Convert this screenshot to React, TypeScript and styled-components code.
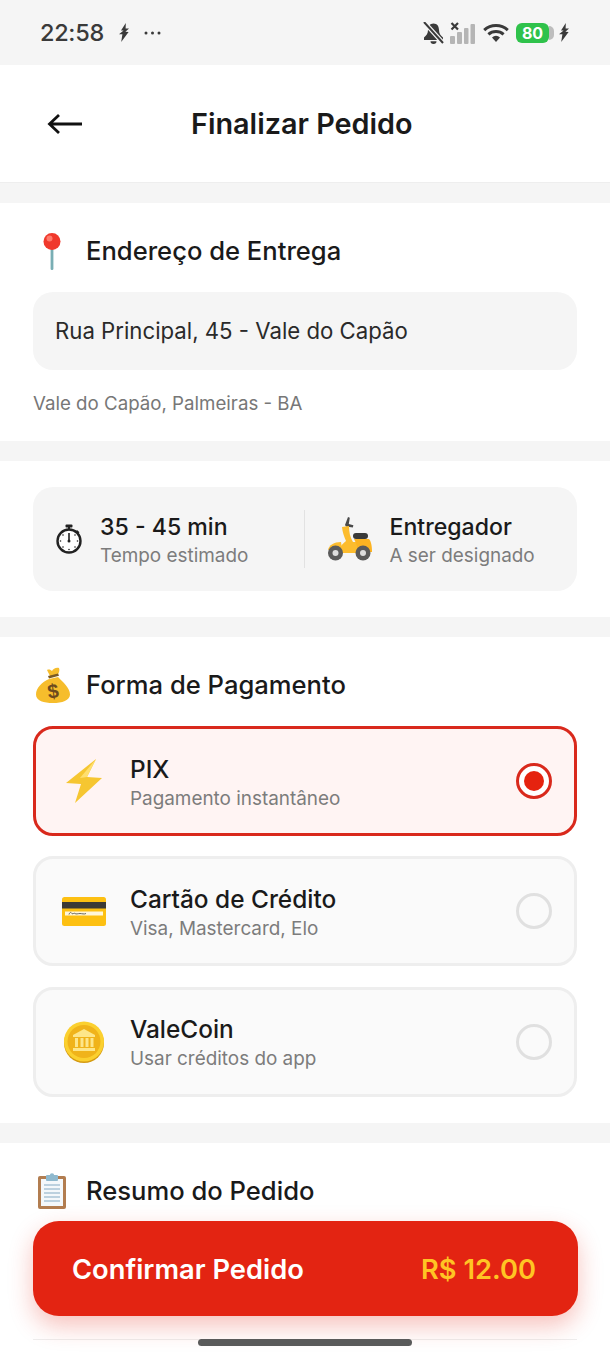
import React from 'react'
import styled, { createGlobalStyle } from 'styled-components'

const GlobalStyle = createGlobalStyle`
  html, body {
    margin: 0;
    padding: 0;
    background: #f5f5f5;
  }
  * {
    box-sizing: border-box;
  }
`

const Screen = styled.div`
  position: relative;
  width: 610px;
  height: 1356px;
  overflow: hidden;
  background: #f5f5f5;
  color: #1a1a1a;
  font-family: Inter, "Noto Sans", sans-serif;
`

const StatusBar = styled.div`
  height: 65px;
  padding: 0 41px 0 40px;
  display: flex;
  align-items: center;
  justify-content: space-between;
  color: #3a3a3a;
`

const StatusGroup = styled.div<{ $gap: number }>`
  display: flex;
  align-items: center;
  gap: ${p => p.$gap}px;
`

const WifiSlot = styled.span`
  display: flex;
  margin: 0 1px 0 2px;
`

const Clock = styled.span`
  font-size: 23.5px;
  font-weight: 500;
  letter-spacing: -0.3px;
`

const Battery = styled.div`
  position: relative;
  width: 33px;
  height: 20px;
  margin-right: 4px;
  border-radius: 6px;
  background: #2fc24b;
  color: #fff;
  font-size: 16px;
  font-weight: 700;
  display: flex;
  align-items: center;
  justify-content: center;
  &::after {
    content: '';
    position: absolute;
    left: 33px;
    top: 3px;
    width: 5px;
    height: 14px;
    border-radius: 0 5px 5px 0;
    background: #bdbdbd;
  }
`

const Header = styled.header`
  height: 118px;
  background: #fff;
  border-bottom: 1px solid #eeeeee;
  display: flex;
  align-items: center;
  padding: 0 47px;
`

const Title = styled.h1`
  margin: 0 0 0 108px;
  font-size: 28.8px;
  font-weight: 600;
  letter-spacing: 0;
`

const Section = styled.section<{ $height: number }>`
  display: flow-root;
  height: ${p => p.$height}px;
  margin-top: 20px;
  padding: 0 33px;
  background: #fff;
`

const SectionHead = styled.div`
  display: flex;
  align-items: center;
  gap: 16px;
  height: 40px;
  margin-top: 0;
  padding-top: 28px;
  box-sizing: content-box;
`

const SectionTitle = styled.h2`
  margin: 0 0 2px;
  font-size: 25.6px;
  font-weight: 500;
  letter-spacing: 0;
`

const IconSlot = styled.span`
  width: 37px;
  display: flex;
  justify-content: center;
  flex: none;
`

const AddressBox = styled.div`
  height: 78px;
  margin-top: 21px;
  border-radius: 20px;
  background: #f5f5f5;
  display: flex;
  align-items: center;
  padding: 0 22px 2px;
  font-size: 22.2px;
  color: #2a2a2a;
`

const AddressNote = styled.p`
  margin: 22px 0 0;
  font-size: 18.7px;
  line-height: 24px;
  color: #777;
`

const InfoCard = styled.div`
  margin-top: 26px;
  height: 104px;
  border-radius: 20px;
  background: #f5f5f5;
  display: flex;
  align-items: center;
`

const InfoCell = styled.div<{ $width: number; $pad: number; $gap: number }>`
  width: ${p => p.$width}px;
  display: flex;
  align-items: center;
  gap: ${p => p.$gap}px;
  padding-left: ${p => p.$pad}px;
`

const Divider = styled.div`
  width: 1px;
  height: 58px;
  background: #e2e2e2;
`

const TextStack = styled.div`
  display: flex;
  flex-direction: column;
  padding-top: 2px;
`

const PrimaryText = styled.span`
  font-size: 23.1px;
  line-height: 30px;
  font-weight: 500;
  color: #1a1a1a;
`

const SecondaryText = styled.span`
  margin-top: 1px;
  font-size: 18.9px;
  line-height: 25px;
  color: #7c7c7c;
`

const OptionList = styled.div`
  margin-top: 21px;
  display: flex;
  flex-direction: column;
  gap: 20.4px;
`

const Option = styled.div<{ $selected?: boolean }>`
  height: 110px;
  border-radius: 20px;
  border: 3px solid ${p => (p.$selected ? '#d9291c' : '#eeeeee')};
  background: ${p => (p.$selected ? '#fff4f3' : '#fafafa')};
  display: flex;
  align-items: center;
  padding: 0 22px 0 24px;
`

const OptionIcon = styled.span`
  width: 48px;
  margin-right: 22px;
  display: flex;
  justify-content: center;
`

const OptionText = styled(TextStack)`
  flex: 1;
`

const OptionName = styled(PrimaryText)`
  font-size: 24.4px;
  margin-bottom: 1px;
`

const Radio = styled.span<{ $selected?: boolean }>`
  width: 36px;
  height: 36px;
  border-radius: 50%;
  border: 3px solid ${p => (p.$selected ? '#d9291c' : '#e0e0e0')};
  background: ${p => (p.$selected ? '#fff' : 'transparent')};
  display: flex;
  align-items: center;
  justify-content: center;
  &::after {
    content: '';
    display: ${p => (p.$selected ? 'block' : 'none')};
    width: 20px;
    height: 20px;
    border-radius: 50%;
    background: #e5230f;
  }
`

const BottomRule = styled.div`
  position: absolute;
  left: 33px;
  right: 33px;
  top: 1339px;
  height: 1px;
  background: #eeeeee;
`

const ConfirmButton = styled.button`
  position: absolute;
  left: 33px;
  top: 1221px;
  width: 545px;
  height: 95px;
  border: 0;
  border-radius: 26px;
  background: #e32412;
  box-shadow: 0 10px 24px rgba(227, 36, 18, 0.28);
  display: flex;
  align-items: center;
  justify-content: space-between;
  padding: 2px 42px 0 39px;
  font-family: inherit;
  font-size: 27.3px;
  font-weight: 600;
  color: #fff;
`

const Price = styled.span`
  color: #ffc424;
`

const HomeBar = styled.div`
  position: absolute;
  left: 198px;
  top: 1339px;
  width: 214px;
  height: 7px;
  border-radius: 4px;
  background: #5a5a5a;
`

const BoltSmall = () => (
  <svg width="10" height="19" viewBox="0 0 10 19">
    <path d="M6.8 0 2 7.4 4.6 7.6 0 11.2h3.4L2.2 19 9.6 9 6.4 8.8 10 5.4H6.6z" fill="#3a3a3a" />
  </svg>
)

const BellOff = () => (
  <svg width="21" height="22" viewBox="0 0 21 22">
    <path d="M10.5 1.5c-3.6 0-5.5 2.8-5.5 6.5 0 3.6-1.8 5.6-4 7.5V18h19v-2.5c-2.2-1.9-4-3.9-4-7.5 0-3.7-1.9-6.5-5.5-6.5z" fill="#3a3a3a" />
    <path d="M7.5 19.3a3 2.7 0 0 0 6 0z" fill="#3a3a3a" />
    <path d="M1 0l19 21" stroke="#f5f5f5" strokeWidth="4.5" />
    <path d="M1 0l19 21" stroke="#3a3a3a" strokeWidth="2" />
  </svg>
)

const Signal = () => (
  <svg width="25" height="22" viewBox="0 0 25 22">
    <path d="M1.5 1l6.5 6.5M8 1L1.5 7.5" stroke="#3a3a3a" strokeWidth="2.2" />
    <rect x="0" y="14" width="5" height="8" rx="1" fill="#b5b5b5" />
    <rect x="7" y="10" width="5" height="12" rx="1" fill="#b5b5b5" />
    <rect x="14" y="6" width="4.5" height="16" rx="1" fill="#b5b5b5" />
    <rect x="20.5" y="2" width="4.5" height="20" rx="1" fill="#b5b5b5" />
  </svg>
)

const Wifi = () => (
  <svg width="26" height="18" viewBox="0 0 26 18">
    <path d="M1.2 6.2a17.5 17.5 0 0 1 23.6 0" fill="none" stroke="#3a3a3a" strokeWidth="3" />
    <path d="M5.4 10.4a11.5 11.5 0 0 1 15.2 0" fill="none" stroke="#3a3a3a" strokeWidth="3" />
    <path d="M9 13.4a6 6 0 0 1 8 0L13 18z" fill="#3a3a3a" />
  </svg>
)

const BackArrow = () => (
  <svg width="36" height="24" viewBox="0 0 36 24">
    <path d="M35 12H3M12 3l-9.5 9 9.5 9" fill="none" stroke="#111" strokeWidth="2.8" />
  </svg>
)

const Pin = () => (
  <svg width="20" height="38" viewBox="0 0 20 38">
    <rect x="8.6" y="14" width="2.8" height="24" rx="1.2" fill="#79aeb4" />
    <circle cx="10" cy="9.5" r="8.5" fill="#f0392c" />
    <circle cx="7.5" cy="6.5" r="3" fill="#ff7a6c" />
  </svg>
)

const Stopwatch = () => (
  <svg width="28" height="30" viewBox="0 0 28 30">
    <rect x="10.5" y="0.5" width="7" height="3" rx="1" fill="#222" />
    <path d="M13 3h2v3h-2zM22 6l2.5 2.2-1.4 1.4L20.8 7.4z" fill="#222" />
    <circle cx="14" cy="17" r="11.5" fill="#fff" stroke="#222" strokeWidth="2.4" />
    <path d="M14 17V9" stroke="#222" strokeWidth="1.6" />
    <circle cx="14" cy="17" r="1.5" fill="#222" />
    <g fill="#222">
      <circle cx="20" cy="11" r=".8" /><circle cx="22.5" cy="17" r=".8" /><circle cx="20" cy="23" r=".8" />
      <circle cx="14" cy="25.5" r=".8" /><circle cx="8" cy="23" r=".8" /><circle cx="5.5" cy="17" r=".8" /><circle cx="8" cy="11" r=".8" />
    </g>
  </svg>
)

const Scooter = () => (
  <svg width="45" height="44" viewBox="0 0 45 44">
    <path d="M18 8l3-8 1.8.8-1 6.2 4.6 1.200-.6 2.400-6.800-1z" fill="#4a4a4a" />
    <path d="M15 10l7-1c0 6 1 11 4 16h5l3 11H12c0-5 3-9 7-12-2-5-3.600-9-4-14z" fill="#fcbc2e" />
    <path d="M27 22h15c2 2 3 7 3 13H31c0-5-2-9-4-13z" fill="#fcb322" />
    <rect x="26" y="16" width="15" height="6" rx="3" fill="#3a3a3a" />
    <path d="M1 33c1-5 6-8 13-8l1 6z" fill="#fcbc2e" />
    <circle cx="8.500" cy="36" r="7.500" fill="#5a5a5a" />
    <circle cx="8.500" cy="36" r="3" fill="#ddd" />
    <circle cx="36" cy="36" r="7.500" fill="#5a5a5a" />
    <circle cx="36" cy="36" r="3" fill="#ddd" />
  </svg>
)

const MoneyBag = () => (
  <svg width="36" height="36" viewBox="0 0 36 36">
    <path d="M16 9l-3-6c2-1 4 0 5 1 1-2 4-4 7-3 1 2 0 5-2 8z" fill="#f6bd2c" />
    <path d="M14 9l10-2.500 1 2.200-10 2.800z" fill="#7a5a24" />
    <path d="M15 12l9-2c5 5 12 11 12 17.500C36 33.500 28 36 19 36S2 34 2 27.500C2 21 8 15 15 12z" fill="#f6bd2c" />
    <text x="19" y="31" fontSize="20" fontWeight="700" fontFamily="Liberation Sans, sans-serif" fill="#6b4a1e" textAnchor="middle" transform="rotate(-8 19 24)">$</text>
  </svg>
)

const Lightning = () => (
  <svg width="36" height="44" viewBox="0 0 36 44">
    <path d="M30 0 0 24l15 1L9 44l27-25-15-1z" fill="#f6c631" />
    <path d="M30 0 14 19l7-1z" fill="#ffdf6e" />
  </svg>
)

const Card = () => (
  <svg width="44" height="29" viewBox="0 0 44 29">
    <rect width="44" height="29" rx="2.500" fill="#fdc012" />
    <rect y="5" width="44" height="6.500" fill="#3c3a36" />
    <rect x="3" y="14.500" width="38" height="4" fill="#fff6da" />
    <path d="M7 17.500c1-3 2-2 3-1s2-1 3 0 3 0 5 0 4 1 6 0" fill="none" stroke="#444" strokeWidth=".8" />
  </svg>
)

const Coin = () => (
  <svg width="42" height="42" viewBox="0 0 42 42">
    <circle cx="21" cy="22" r="20" fill="#d49a12" />
    <circle cx="21" cy="20.500" r="20" fill="#fbd02f" />
    <circle cx="21" cy="20.500" r="16.500" fill="#f0b31a" />
    <path d="M21 8l11 6v2H10v-2z" fill="#fde68a" />
    <path d="M12 17h3v9h-3zM17.500 17h3v9h-3zM22.500 17h3v9h-3zM27.500 17h3v9h-3z" fill="#fde68a" />
    <rect x="10" y="27" width="22" height="3" fill="#fde68a" />
  </svg>
)

const Clipboard = () => (
  <svg width="34" height="36" viewBox="0 0 34 36">
    <rect x="1" y="3" width="28" height="33" rx="2" fill="#b27d50" transform="translate(2 0)" />
    <rect x="6" y="6" width="22" height="27" fill="#f4f8fb" />
    <path d="M9 12h16M9 16h16M9 20h16M9 24h16M9 28h16" stroke="#a9c4d6" strokeWidth="1.300" />
    <rect x="11" y="2" width="12" height="6" rx="1" fill="#8fb9ce" />
    <circle cx="17" cy="2.500" r="2.200" fill="#8fb9ce" />
  </svg>
)

const options = [
  { name: 'PIX', detail: 'Pagamento instantâneo', icon: <Lightning />, selected: true },
  { name: 'Cartão de Crédito', detail: 'Visa, Mastercard, Elo', icon: <Card />, selected: false },
  { name: 'ValeCoin', detail: 'Usar créditos do app', icon: <Coin />, selected: false },
]

export default function App() {
  return (
    <Screen>
      <GlobalStyle />
      <StatusBar>
        <StatusGroup $gap={15}>
          <Clock>22:58</Clock>
          <BoltSmall />
          <svg width="17" height="4" viewBox="0 0 17 4">
            <circle cx="2" cy="2" r="1.500" fill="#3a3a3a" />
            <circle cx="8.500" cy="2" r="1.500" fill="#3a3a3a" />
            <circle cx="15" cy="2" r="1.500" fill="#3a3a3a" />
          </svg>
        </StatusGroup>
        <StatusGroup $gap={6}>
          <BellOff />
          <Signal />
          <WifiSlot><Wifi /></WifiSlot>
          <Battery>80</Battery>
          <BoltSmall />
        </StatusGroup>
      </StatusBar>

      <Header>
        <BackArrow />
        <Title>Finalizar Pedido</Title>
      </Header>

      <Section $height={238}>
        <SectionHead>
          <IconSlot><Pin /></IconSlot>
          <SectionTitle>Endereço de Entrega</SectionTitle>
        </SectionHead>
        <AddressBox>Rua Principal, 45 - Vale do Capão</AddressBox>
        <AddressNote>Vale do Capão, Palmeiras - BA</AddressNote>
      </Section>

      <Section $height={156}>
        <InfoCard>
          <InfoCell $width={271} $pad={22} $gap={17}>
            <Stopwatch />
            <TextStack>
              <PrimaryText>35 - 45 min</PrimaryText>
              <SecondaryText>Tempo estimado</SecondaryText>
            </TextStack>
          </InfoCell>
          <Divider />
          <InfoCell $width={273} $pad={22} $gap={18}>
            <Scooter />
            <TextStack>
              <PrimaryText>Entregador</PrimaryText>
              <SecondaryText>A ser designado</SecondaryText>
            </TextStack>
          </InfoCell>
        </InfoCard>
      </Section>

      <Section $height={486}>
        <SectionHead>
          <IconSlot><MoneyBag /></IconSlot>
          <SectionTitle>Forma de Pagamento</SectionTitle>
        </SectionHead>
        <OptionList>
          {options.map(o => (
            <Option key={o.name} $selected={o.selected}>
              <OptionIcon>{o.icon}</OptionIcon>
              <OptionText>
                <OptionName>{o.name}</OptionName>
                <SecondaryText>{o.detail}</SecondaryText>
              </OptionText>
              <Radio $selected={o.selected} />
            </Option>
          ))}
        </OptionList>
      </Section>

      <Section $height={220}>
        <SectionHead>
          <IconSlot><Clipboard /></IconSlot>
          <SectionTitle>Resumo do Pedido</SectionTitle>
        </SectionHead>
      </Section>

      <BottomRule />
      <ConfirmButton>
        <span>Confirmar Pedido</span>
        <Price>R$ 12.00</Price>
      </ConfirmButton>
      <HomeBar />
    </Screen>
  )
}
